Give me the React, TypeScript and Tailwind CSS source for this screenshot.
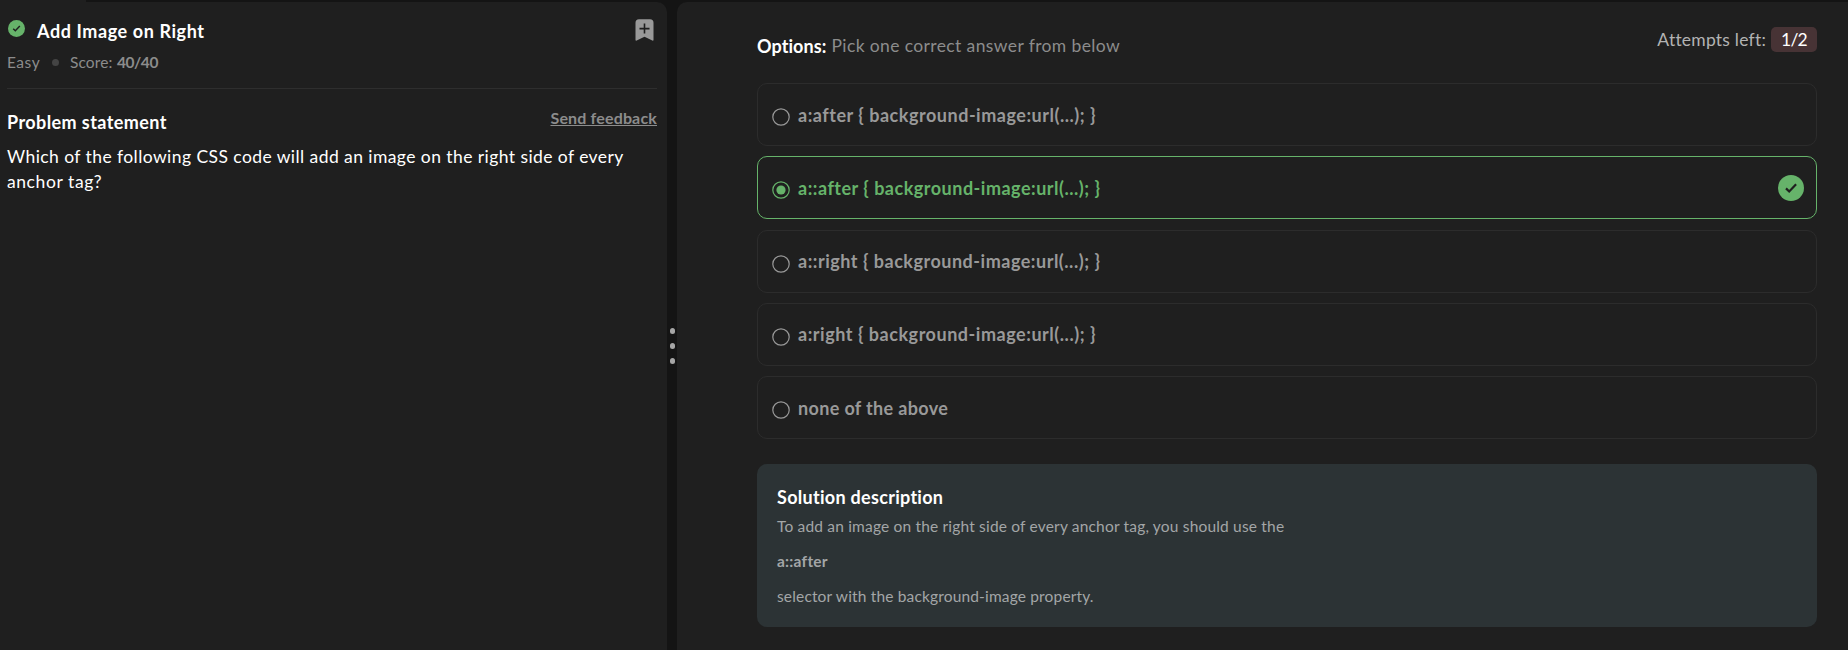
type Option = { text: string; tracking: string; selected?: boolean };

const options: Option[] = [
  { text: 'a:after { background-image:url(...); }', tracking: 'tracking-[0.52px]' },
  { text: 'a::after { background-image:url(...); }', tracking: 'tracking-[0.5px]', selected: true },
  { text: 'a::right { background-image:url(...); }', tracking: 'tracking-[0.51px]' },
  { text: 'a:right { background-image:url(...); }', tracking: 'tracking-[0.53px]' },
  { text: 'none of the above', tracking: 'tracking-[0.35px]' },
];

function CheckBadge({ className }: { className: string }) {
  return (
    <svg viewBox="0 0 26 26" className={className} aria-hidden="true">
      <circle cx="13" cy="13" r="13" fill="#66b36a" />
      <path d="M8 13.4l3.2 3.1 6.9-7.2" fill="none" stroke="#1f1f1f" strokeWidth="2.2" />
    </svg>
  );
}

function BookmarkPlus() {
  return (
    <svg viewBox="0 0 19 22" className="h-[22px] w-[19px]" aria-hidden="true">
      <path d="M4 0.3h11a3.5 3.5 0 0 1 3.5 3.5v17.1a.8.8 0 0 1-1.2.7L9.5 17.8l-7.8 3.8a.8.8 0 0 1-1.2-.7V3.8A3.5 3.5 0 0 1 4 .3z" fill="#999" />
      <path d="M9.5 4.6v10M4.5 9.6h10" stroke="#1f1f1f" strokeWidth="1.6" />
    </svg>
  );
}

function Radio({ selected }: { selected?: boolean }) {
  return (
    <svg viewBox="0 0 18 18" className="mt-[5px] size-[18px] shrink-0" aria-hidden="true">
      <circle cx="9" cy="9" r="8.2" fill="none" stroke={selected ? '#66b36a' : '#999'} strokeWidth="1.2" />
      {selected && <circle cx="9" cy="9" r="4.6" fill="#66b36a" />}
    </svg>
  );
}

function ProblemPanel() {
  return (
    <section className="flex w-[667px] shrink-0 flex-col rounded-tr-[10px] bg-[#1f1f1f] pr-[10px] pl-[7px]">
      <header className="h-[87px] border-b border-[#2e2e2e] pt-4">
        <div className="flex h-6 items-start justify-between">
          <div className="flex items-start">
            <CheckBadge className="mt-[2px] ml-[1px] size-[17px]" />
            <h1 className="mt-[1px] ml-3 text-lg leading-6 font-bold tracking-[0.59px] text-white">Add Image on Right</h1>
          </div>
          <button className="mt-[1px] mr-[3px]">
            <BookmarkPlus />
          </button>
        </div>
        <div className="mt-[10px] flex items-center text-[15.5px] leading-5 text-[#8c8c8c]">
          <span className="w-[45px] tracking-[0.5px]">Easy</span>
          <span className="size-[7px] rounded-full bg-[#444]" />
          <span className="ml-[11px] w-[47px] tracking-[0.1px]">Score:</span>
          <span className="font-bold tracking-[-0.45px]">40/40</span>
        </div>
      </header>
      <div className="mt-[19px] flex items-start justify-between">
        <h2 className="mt-[2px] text-lg leading-6 font-bold tracking-[0.41px] text-white">Problem statement</h2>
        <a className="text-base leading-5 font-bold tracking-[0.16px] text-[#8c8c8c] underline decoration-1 underline-offset-1">Send feedback</a>
      </div>
      <p className="mt-[10px] leading-[25px] tracking-[0.43px] whitespace-nowrap text-white">
        Which of the following CSS code will add an image on the right side of every
        <br />
        <span className="tracking-[0.58px]">anchor tag?</span>
      </p>
    </section>
  );
}

function OptionRow({ text, tracking, selected }: Option) {
  return (
    <li
      className={`flex h-[63px] items-center justify-between rounded-[10px] border pr-3 pl-[13.5px] ${
        selected ? 'border-[#66b36a] text-[#66b36a]' : 'border-[#2c2c2c] text-[#999]'
      }`}
    >
      <label className="flex items-center gap-[8.5px]">
        <Radio selected={selected} />
        <span className={`text-lg leading-6 font-bold ${tracking}`}>{text}</span>
      </label>
      {selected && <CheckBadge className="size-[26px]" />}
    </li>
  );
}

function AnswerPanel() {
  return (
    <section className="min-w-0 flex-1 rounded-tl-[10px] bg-[#1f1f1f] pr-[31px] pl-20">
      <header className="flex h-[81px] items-start justify-between">
        <p className="mt-8 flex leading-6 text-[#8c8c8c]">
          <b className="w-[74.5px] text-lg leading-6 font-bold tracking-[0.07px] text-white">Options:</b>
          <span className="tracking-[0.38px]">Pick one correct answer from below</span>
        </p>
        <div className="mt-[25px] flex gap-[5px] leading-[25px] text-[#b3b3b3]">
          <span className="tracking-[0.22px]">Attempts left:</span>
          <span className="w-[46px] rounded-[5px] bg-[#473335] text-center tracking-[-0.8px] text-white">1/2</span>
        </div>
      </header>
      <ul className="flex flex-col gap-[10.25px]">
        {options.map((option) => (
          <OptionRow key={option.text} {...option} />
        ))}
      </ul>
      <article className="mt-[25px] h-[163px] rounded-[10px] bg-[#2c3335] px-5 pt-[21px] text-[15.5px] leading-5 text-[#a3a6a7]">
        <h3 className="text-lg leading-6 font-bold tracking-[0.29px] text-white">Solution description</h3>
        <p className="mt-[7px] tracking-[0.18px]">To add an image on the right side of every anchor tag, you should use the</p>
        <p className="mt-[15px] font-bold tracking-[0.25px]">a::after</p>
        <p className="mt-[15px] tracking-[0.16px]">selector with the background-image property.</p>
      </article>
    </section>
  );
}

export default function App() {
  return (
    <main className="flex h-[650px] w-[1848px] flex-col overflow-hidden bg-[#141414] font-['Lato',sans-serif] text-[17.5px]">
      <div className="h-[2px] w-[86px] shrink-0 bg-[#1f1f1f]" />
      <div className="flex min-h-0 flex-1">
        <ProblemPanel />
        <div className="flex w-[10px] shrink-0 flex-col items-center justify-center gap-[9.5px] pt-[48px] pb-[8px] pl-[1px]">
          <span className="size-[5.5px] rounded-full bg-[#a6a6a6]" />
          <span className="size-[5.5px] rounded-full bg-[#a6a6a6]" />
          <span className="size-[5.5px] rounded-full bg-[#a6a6a6]" />
        </div>
        <AnswerPanel />
      </div>
    </main>
  );
}
